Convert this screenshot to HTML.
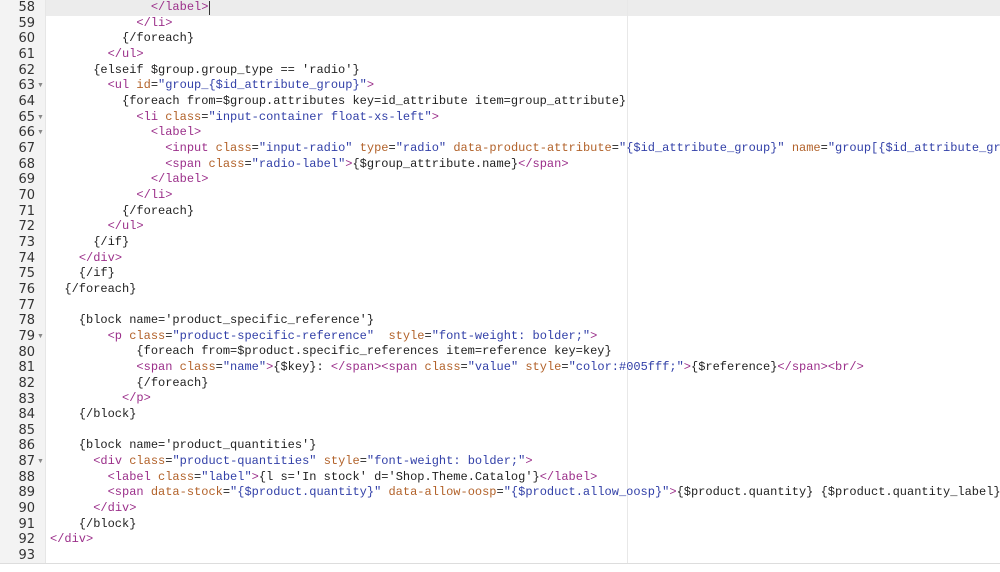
<!DOCTYPE html>
<html><head><style>
html,body{margin:0;padding:0;width:1000px;height:572px;overflow:hidden;background:#fff}
#g{position:absolute;left:0;top:0;width:45px;height:563px;background:#f3f3f3;border-right:1px solid #e6e6e6}
.ln{position:absolute;left:0;width:35px;text-align:right;font:13px "DejaVu Sans","Liberation Sans",sans-serif;color:#333;height:15.66px;line-height:15.66px}
.fd{position:absolute;left:37px;font-size:7px;color:#888;line-height:15.66px}
#code{position:absolute;left:50px;top:0;width:950px;height:563px;overflow:hidden;font:12px "Liberation Mono",monospace;color:#222;white-space:pre;line-height:15.66px}
.t{color:#9b2f8a}.a{color:#b2622a}.s{color:#3240a8}
#hl{position:absolute;left:0;top:0;width:1000px;height:15.66px;background:#ececec}
#pm{position:absolute;left:627px;top:0;width:1px;height:563px;background:#e8e8e8}
#bt{position:absolute;left:0;top:563px;width:1000px;height:1px;background:#ddd}
#cur{position:absolute;left:209px;top:1px;width:1px;height:14px;background:#333}
</style></head><body>
<div id="hl"></div>
<div id="g"></div>
<div id="pm"></div>
<div id="bt"></div>
<div id="code"><span>              <span class="t">&lt;/label&gt;</span></span>
            <span class="t">&lt;/li&gt;</span>
          {/foreach}
        <span class="t">&lt;/ul&gt;</span>
      {elseif $group.group_type == 'radio'}
        <span class="t">&lt;ul</span> <span class="a">id</span>=<span class="s">"group_{$id_attribute_group}"</span><span class="t">&gt;</span>
          {foreach from=$group.attributes key=id_attribute item=group_attribute}
            <span class="t">&lt;li</span> <span class="a">class</span>=<span class="s">"input-container float-xs-left"</span><span class="t">&gt;</span>
              <span class="t">&lt;label&gt;</span>
                <span class="t">&lt;input</span> <span class="a">class</span>=<span class="s">"input-radio"</span> <span class="a">type</span>=<span class="s">"radio"</span> <span class="a">data-product-attribute</span>=<span class="s">"{$id_attribute_group}"</span> <span class="a">name</span>=<span class="s">"group[{$id_attribute_group}]"</span>
                <span class="t">&lt;span</span> <span class="a">class</span>=<span class="s">"radio-label"</span><span class="t">&gt;</span>{$group_attribute.name}<span class="t">&lt;/span&gt;</span>
              <span class="t">&lt;/label&gt;</span>
            <span class="t">&lt;/li&gt;</span>
          {/foreach}
        <span class="t">&lt;/ul&gt;</span>
      {/if}
    <span class="t">&lt;/div&gt;</span>
    {/if}
  {/foreach}

    {block name='product_specific_reference'}
        <span class="t">&lt;p</span> <span class="a">class</span>=<span class="s">"product-specific-reference"</span>  <span class="a">style</span>=<span class="s">"font-weight: bolder;"</span><span class="t">&gt;</span>
            {foreach from=$product.specific_references item=reference key=key}
            <span class="t">&lt;span</span> <span class="a">class</span>=<span class="s">"name"</span><span class="t">&gt;</span>{$key}: <span class="t">&lt;/span&gt;&lt;span</span> <span class="a">class</span>=<span class="s">"value"</span> <span class="a">style</span>=<span class="s">"color:#005fff;"</span><span class="t">&gt;</span>{$reference}<span class="t">&lt;/span&gt;&lt;br/&gt;</span>
            {/foreach}
          <span class="t">&lt;/p&gt;</span>
    {/block}

    {block name='product_quantities'}
      <span class="t">&lt;div</span> <span class="a">class</span>=<span class="s">"product-quantities"</span> <span class="a">style</span>=<span class="s">"font-weight: bolder;"</span><span class="t">&gt;</span>
        <span class="t">&lt;label</span> <span class="a">class</span>=<span class="s">"label"</span><span class="t">&gt;</span>{l s='In stock' d='Shop.Theme.Catalog'}<span class="t">&lt;/label&gt;</span>
        <span class="t">&lt;span</span> <span class="a">data-stock</span>=<span class="s">"{$product.quantity}"</span> <span class="a">data-allow-oosp</span>=<span class="s">"{$product.allow_oosp}"</span><span class="t">&gt;</span>{$product.quantity} {$product.quantity_label}<span class="t">&lt;/span&gt;</span>
      <span class="t">&lt;/div&gt;</span>
    {/block}
<span class="t">&lt;/div&gt;</span>
</div>
<div id="cur"></div>
<div class="ln" style="top:0">58</div><div class="ln" style="top:15.66px">59</div><div class="ln" style="top:31.32px">60</div><div class="ln" style="top:46.98px">61</div><div class="ln" style="top:62.64px">62</div><div class="ln" style="top:78.3px">63</div><div class="ln" style="top:93.96px">64</div><div class="ln" style="top:109.62px">65</div><div class="ln" style="top:125.28px">66</div><div class="ln" style="top:140.94px">67</div><div class="ln" style="top:156.6px">68</div><div class="ln" style="top:172.26px">69</div><div class="ln" style="top:187.92px">70</div><div class="ln" style="top:203.58px">71</div><div class="ln" style="top:219.24px">72</div><div class="ln" style="top:234.9px">73</div><div class="ln" style="top:250.56px">74</div><div class="ln" style="top:266.22px">75</div><div class="ln" style="top:281.88px">76</div><div class="ln" style="top:297.54px">77</div><div class="ln" style="top:313.2px">78</div><div class="ln" style="top:328.86px">79</div><div class="ln" style="top:344.52px">80</div><div class="ln" style="top:360.18px">81</div><div class="ln" style="top:375.84px">82</div><div class="ln" style="top:391.5px">83</div><div class="ln" style="top:407.16px">84</div><div class="ln" style="top:422.82px">85</div><div class="ln" style="top:438.48px">86</div><div class="ln" style="top:454.14px">87</div><div class="ln" style="top:469.8px">88</div><div class="ln" style="top:485.46px">89</div><div class="ln" style="top:501.12px">90</div><div class="ln" style="top:516.78px">91</div><div class="ln" style="top:532.44px">92</div><div class="ln" style="top:548.1px">93</div>
<div class="fd" style="top:78.3px">▼</div><div class="fd" style="top:109.62px">▼</div><div class="fd" style="top:125.28px">▼</div><div class="fd" style="top:328.86px">▼</div><div class="fd" style="top:454.14px">▼</div>
</body></html>
